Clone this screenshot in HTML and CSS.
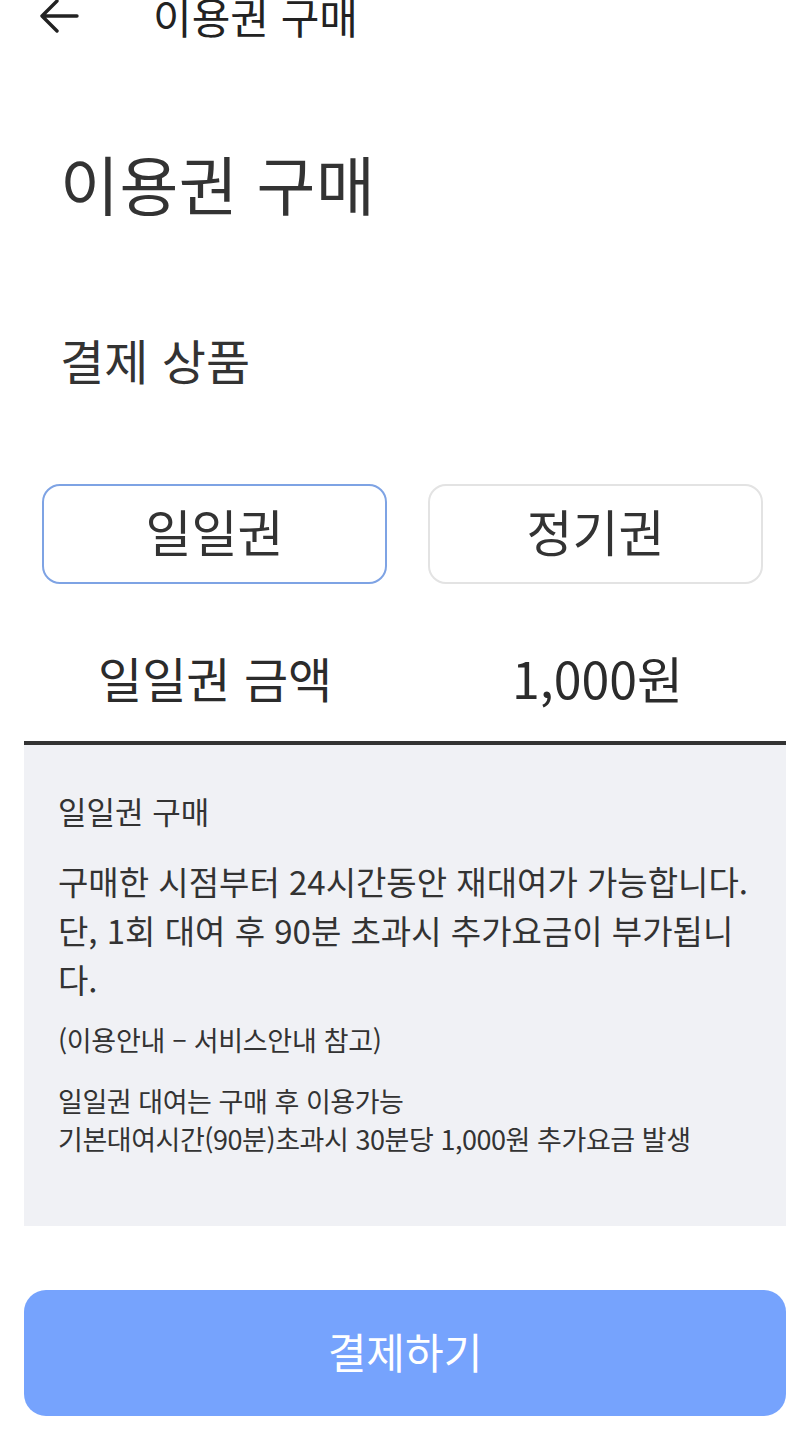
FILE: index.html
```html
<!DOCTYPE html>
<html lang="ko">
<head>
    <meta charset="UTF-8">
    <meta name="viewport" content="width=device-width, initial-scale=1.0">
    <title>이용권 구매</title>
    <link rel="stylesheet" href="styles.css">
</head>
<body>
    <div class="topbar">
        <button class="back" aria-label="뒤로">
            <svg width="40" height="36" viewBox="0 0 40 36">
                <path d="M38 18H4M18 3L3 18l15 15" fill="none" stroke="#222" stroke-width="3.4" stroke-linecap="round" stroke-linejoin="round"/>
            </svg>
        </button>
        <span class="topbar-title">이용권 구매</span>
    </div>

    <h1 class="page-title">이용권 구매</h1>
    <h2 class="section-title">결제 상품</h2>

    <div class="ticket-tabs">
        <button class="tab active">일일권</button>
        <button class="tab">정기권</button>
    </div>

    <div class="price-row">
        <span class="price-label">일일권 금액</span>
        <span class="price-value">1,000원</span>
    </div>

    <div class="info-box">
        <p class="info-title">일일권 구매</p>
        <p class="info-main">구매한 시점부터 24시간동안 재대여가 가능합니다. 단, 1회 대여 후 90분 초과시 추가요금이 부가됩니다.</p>
        <p class="info-note">(이용안내 – 서비스안내 참고)</p>
        <p class="info-detail">일일권 대여는 구매 후 이용가능<br>기본대여시간(90분)초과시 30분당 1,000원 추가요금 발생</p>
    </div>

    <button class="pay">결제하기</button>
</body>
</html>
```

FILE: styles.css
```css
body {
    margin: 0;
    font-family: 'Noto Sans CJK KR', 'Noto Sans', sans-serif;
    color: #333;
    background-color: #fff;
}
p, h1, h2 {
    margin: 0;
}
button {
    font-family: inherit;
}
.topbar {
    display: flex;
    align-items: center;
    height: 36px;
    margin-top: -2px;
}
.back {
    display: flex;
    padding: 0;
    margin-left: 39px;
    background: none;
    border: none;
}
.topbar-title {
    margin-left: 74px;
    font-size: 42px;
    line-height: 36px;
    color: #222;
}
.page-title {
    margin: 108px 0 0 60px;
    font-size: 64px;
    font-weight: normal;
    line-height: 80px;
    letter-spacing: 0.5px;
}
.section-title {
    margin: 102px 0 0 60px;
    font-size: 48px;
    font-weight: normal;
    line-height: 70px;
}
.ticket-tabs {
    display: grid;
    grid-template-columns: 345px 335px;
    gap: 41px;
    margin: 90px 0 0 42px;
}
.tab {
    height: 100px;
    padding: 0 0 8px;
    font-size: 50px;
    color: #333;
    background-color: #fff;
    border: 2px solid #e3e3e3;
    border-radius: 18px;
}
.tab.active {
    border-color: #7ea3e4;
}
.price-row {
    display: flex;
    align-items: center;
    box-sizing: border-box;
    height: 161px;
    margin: 0 24px;
    padding-top: 28px;
    border-bottom: 4px solid #333;
}
.price-label {
    width: 414px;
    padding-left: 74px;
    font-size: 48px;
    color: #2b2b2b;
}
.price-value {
    font-size: 50px;
    color: #2b2b2b;
}
.info-box {
    height: 481px;
    box-sizing: border-box;
    margin: 0 24px;
    padding: 42px 34px 0 34px;
    background-color: #f0f1f5;
    color: #333;
}
.info-title {
    font-size: 31px;
    line-height: 48px;
}
.info-main {
    margin-top: 22px;
    font-size: 33px;
    line-height: 49px;
}
.info-note {
    margin-top: 15px;
    font-size: 27px;
    line-height: 42px;
    letter-spacing: -0.3px;
}
.info-detail {
    margin-top: 21px;
    font-size: 27px;
    line-height: 38px;
    letter-spacing: -0.45px;
}
.pay {
    display: block;
    width: 762px;
    height: 126px;
    margin: 64px 24px 0;
    padding: 0 0 6px;
    font-size: 42px;
    color: #fff;
    background-color: #76a3fd;
    border: none;
    border-radius: 22px;
}
```
